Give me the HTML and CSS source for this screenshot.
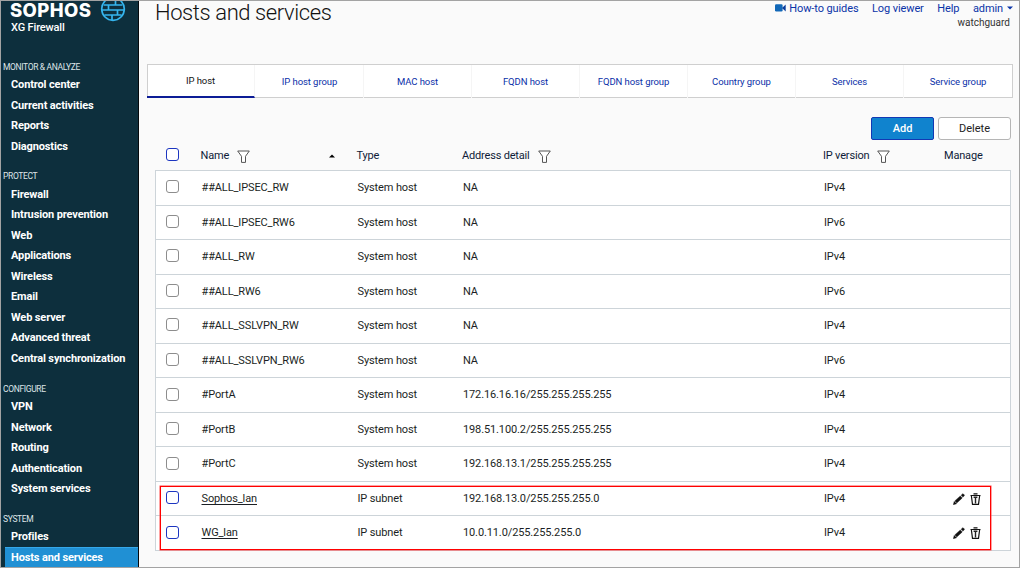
FILE: index.html
```
<!DOCTYPE html>
<html lang="en">
<head>
<meta charset="utf-8">
<title>Hosts and services</title>
<link rel="stylesheet" href="styles.css">
</head>
<body>
<svg class="defs" aria-hidden="true">
  <symbol id="funnel" viewBox="0 0 13 13"><path d="M.7 1h11.600L8.500 6.300v6.100H4.500V6.300z" fill="#fff" stroke="#555" stroke-width="1"/></symbol>
  <symbol id="pencil" viewBox="0 0 12 12"><path d="M.3 11.700l.9-3.300 2.400 2.400zM1.800 7.900l5.500-5 2 2-5.500 5.200zM8.100 2.200L9.500.9q.4-.3.8 0l1 1q.3.400 0 .800l-1.300 1.400z" fill="#111" stroke="#111" stroke-width=".4"/></symbol>
  <symbol id="trash" viewBox="0 0 11 12"><path d="M.5 2.500h10M3.500.800h4M1.400 3l1.100 8.400h6l1.100-8.400" fill="none" stroke="#111" stroke-width="1.200"/><path d="M3.600 4.200h3.800M5.500 4v6.500" fill="none" stroke="#222" stroke-width="1.400"/></symbol>
</svg>
<div class="app">
  <nav class="sidebar">
    <div class="brand">
      <span class="brand-name">SOPHOS</span>
      <svg class="brand-icon" width="26" height="26" viewBox="0 0 26 26"><g fill="none" stroke="#35b5ee" stroke-width="1.700"><circle cx="13" cy="13" r="11.300"/><path d="M3.500 9h19M2 14h22M4.500 19h17M15.500 2v7M8.500 9v5M17.500 14v5M12 19v5"/></g></svg>
    </div>
    <div class="product">XG Firewall</div>
    <div class="group g1"><h2>MONITOR &amp; ANALYZE</h2><a>Control center</a><a>Current activities</a><a>Reports</a><a>Diagnostics</a></div>
    <div class="group g2"><h2>PROTECT</h2><a>Firewall</a><a>Intrusion prevention</a><a>Web</a><a>Applications</a><a>Wireless</a><a>Email</a><a>Web server</a><a>Advanced threat</a><a>Central synchronization</a></div>
    <div class="group g3"><h2>CONFIGURE</h2><a>VPN</a><a>Network</a><a>Routing</a><a>Authentication</a><a>System services</a></div>
    <div class="group g4"><h2>SYSTEM</h2><a>Profiles</a><a class="current">Hosts and services</a></div>
  </nav>
  <main class="main">
    <header class="top">
      <h1>Hosts and services</h1>
      <div class="account">
        <div class="links">
          <a class="howto"><svg width="11" height="8" viewBox="0 0 11 8"><rect y=".3" width="7.600" height="7.200" rx="1.200" fill="#1268b8"/><path d="M7 4l3.700-3.400v6.800z" fill="#0a3d9c"/></svg>How-to guides</a>
          <a>Log viewer</a><a>Help</a>
          <a>admin<svg class="caret" width="6" height="4" viewBox="0 0 6 4"><path d="M0 .4h6L3 3.600z" fill="#0a34a8"/></svg></a>
        </div>
        <div class="tenant">watchguard</div>
      </div>
    </header>
    <div class="tabs"><a class="active">IP host</a><a>IP host group</a><a>MAC host</a><a>FQDN host</a><a>FQDN host group</a><a>Country group</a><a>Services</a><a>Service group</a></div>
    <div class="actions"><button class="add">Add</button><button class="delete">Delete</button></div>
    <div class="table">
      <div class="row head"><i class="box blue"></i><span class="name">Name<svg class="funnel"><use href="#funnel"/></svg><svg class="sort" width="6" height="4" viewBox="0 0 6 4"><path d="M0 3.600L3 .4l3 3.200z" fill="#000"/></svg></span><span>Type</span><span>Address detail<svg class="funnel"><use href="#funnel"/></svg></span><span>IP version<svg class="funnel"><use href="#funnel"/></svg></span><span class="manage">Manage</span></div>
      <div class="body">
        <div class="row"><i class="box"></i><span>##ALL_IPSEC_RW</span><span>System host</span><span>NA</span><span>IPv4</span></div>
        <div class="row"><i class="box"></i><span>##ALL_IPSEC_RW6</span><span>System host</span><span>NA</span><span>IPv6</span></div>
        <div class="row"><i class="box"></i><span>##ALL_RW</span><span>System host</span><span>NA</span><span>IPv4</span></div>
        <div class="row"><i class="box"></i><span>##ALL_RW6</span><span>System host</span><span>NA</span><span>IPv6</span></div>
        <div class="row"><i class="box"></i><span>##ALL_SSLVPN_RW</span><span>System host</span><span>NA</span><span>IPv4</span></div>
        <div class="row"><i class="box"></i><span>##ALL_SSLVPN_RW6</span><span>System host</span><span>NA</span><span>IPv6</span></div>
        <div class="row"><i class="box"></i><span>#PortA</span><span>System host</span><span class="addr">172.16.16.16/255.255.255.255</span><span>IPv4</span></div>
        <div class="row"><i class="box"></i><span>#PortB</span><span>System host</span><span class="addr">198.51.100.2/255.255.255.255</span><span>IPv4</span></div>
        <div class="row"><i class="box"></i><span>#PortC</span><span>System host</span><span class="addr">192.168.13.1/255.255.255.255</span><span>IPv4</span></div>
        <div class="row"><i class="box blue"></i><span><u>Sophos_lan</u></span><span>IP subnet</span><span class="addr">192.168.13.0/255.255.255.0</span><span>IPv4</span><span class="tools"><svg width="12" height="12"><use href="#pencil"/></svg><svg width="11" height="12"><use href="#trash"/></svg></span></div>
        <div class="row"><i class="box blue"></i><span><u>WG_lan</u></span><span>IP subnet</span><span class="addr">10.0.11.0/255.255.255.0</span><span>IPv4</span><span class="tools"><svg width="12" height="12"><use href="#pencil"/></svg><svg width="11" height="12"><use href="#trash"/></svg></span></div>
        <div class="callout"></div>
      </div>
    </div>
  </main>
</div>
</body>
</html>
```
FILE: styles.css
```
* { box-sizing: border-box; }
body { margin: 0; font: 11px/14px Roboto, "Liberation Sans", sans-serif; color: #1b1f24; }
h1, h2 { margin: 0; font-weight: 400; }
.defs { position: absolute; width: 0; height: 0; }
.app { width: 1020px; height: 568px; border: 1px solid #a3a3a3; display: flex; overflow: hidden; background: #fafafa; }

.sidebar { width: 138px; flex: none; background: #0d2f3d; border-right: 1px solid #05090c; color: #fff; overflow: hidden; }
.brand { height: 19px; display: flex; padding-left: 9px; }
.brand-name { width: 85px; margin-right: 5px; font: 800 18.5px/19px Inter, sans-serif; letter-spacing: 0.4px; white-space: nowrap; }
.brand-icon { flex: none; margin-top: -5px; }
.product { height: 38.5px; padding-left: 10px; line-height: 15px; font-weight: 500; letter-spacing: -.15px; }
.group { margin-bottom: 11.8px; }
.group h2 { height: 15.5px; margin-bottom: .1px; padding-left: 2px; font-size: 8.5px; line-height: 17px; letter-spacing: -.35px; color: #dfe6e9; }
.group a { display: block; height: 20.5px; padding-left: 6px; margin-left: 4px; line-height: 22px; font-weight: 700; letter-spacing: -.13px; white-space: nowrap; }
.g2, .g3, .g4 { padding-top: .4px; }
.group .current { background: #2090d4; border-top: 1px solid #35a8ea; line-height: 19px; }

.main { flex: 1; padding: 0 7px 0 8px; }
.top { height: 63px; display: flex; justify-content: space-between; padding: 0 0 0 8px; }
h1 { font-size: 22px; line-height: 23px; font-weight: 300; letter-spacing: -.4px; color: #111; }
.links { display: flex; gap: 13.5px; color: #0a34a8; line-height: 15px; letter-spacing: -.1px; padding-right: 0; }
.howto svg { margin-right: 3px; }
.caret { margin: 0 0 2px 4px; }
.tenant { text-align: right; font-size: 10px; line-height: 13px; color: #333; padding-right: 3px; }

.tabs { height: 34px; width: 866px; border: 1px solid #cfcfcf; background: #fff; display: grid; grid-template-columns: repeat(8, 1fr); text-align: center; font-size: 9.5px; line-height: 33px; letter-spacing: -.08px; color: #0a2fa8; }
.tabs a { border-right: 1px solid #f5f5f5; }
.tabs a:last-child { border-right: 0; }
.tabs .active { color: #111; border-bottom: 2px solid #0c1c96; margin: 0 1px 0 -1px; line-height: 31px; }

.actions { height: 42px; padding: 19px 2px 0 0; display: flex; justify-content: flex-end; gap: 4px; }
button { height: 23px; font: 11px/20px Roboto, sans-serif; padding: 0; }
.add { width: 63px; background: #1083ce; border: 1px solid #1238b4; border-radius: 2px; color: #fff; font-weight: 500; }
.delete { width: 73px; background: #fff; border: 1px solid #b5b5b5; border-radius: 3px; color: #222; }

.table { margin-left: 8px; width: 856px; letter-spacing: -.12px; }
.row { display: grid; grid-template-columns: 35.5px 156px 105.5px 361px 130px auto; align-items: center; padding-left: 10px; white-space: nowrap; }
.head { height: 30px; color: #0f1c38; }
.head > span { display: flex; align-items: center; margin-top: 1px; letter-spacing: -.18px; }
.head .manage { margin-left: -9px; }
.funnel { width: 13px; height: 13px; margin: 2px 0 0 8px; }
.sort { margin-left: auto; margin-right: 21.5px; }
.head .box { margin: -1px 0 0 .6px; }
.body { position: relative; border: 1px solid #cdd4d9; border-bottom: 0; background: #fff; }
.body .row { height: 34.55px; border-bottom: 1px solid #cdd4d9; }
.body .box { margin-top: -2px; }
.body span { margin-top: .5px; }
.body .tools { margin: 0 0 0 -.6px; }
.addr { letter-spacing: -.12px; }
.box { width: 13px; height: 13px; border: 1px solid #8d8d8d; border-radius: 3px; background: #fff; }
.box.blue { border-color: #1c35c0; }
u { text-underline-offset: 1.5px; }
.tools { display: flex; gap: 5px; }
.callout { position: absolute; left: 4px; top: 315px; width: 831px; height: 64px; border: 1px solid #f00; box-shadow: 0 0 0 .5px #f44; }
```
